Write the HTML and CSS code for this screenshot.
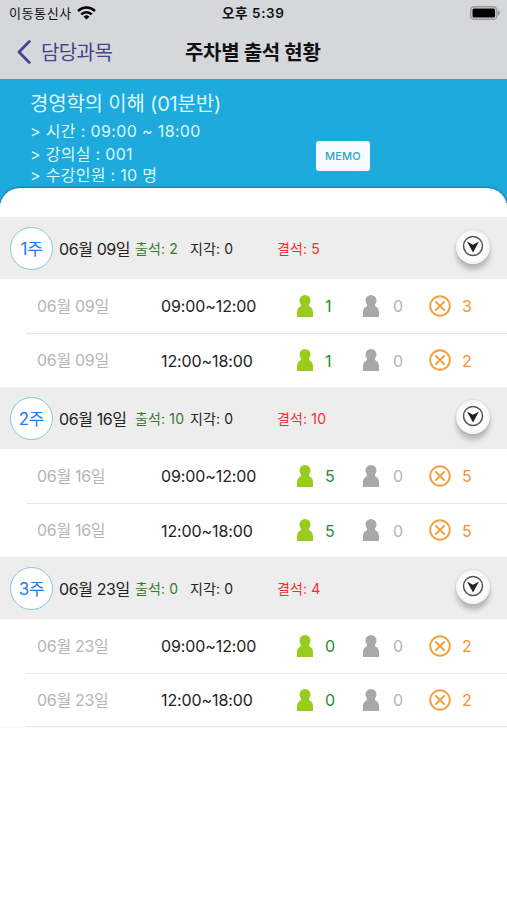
FILE: index.html
```
<!DOCTYPE html>
<html lang="ko">
<head>
<meta charset="UTF-8">
<meta name="viewport" content="width=device-width, initial-scale=1.0">
<title>주차별 출석 현황</title>
<link rel="stylesheet" href="styles.css">
</head>
<body>

<svg class="defs" width="0" height="0">
  <symbol id="person" viewBox="0 0 16 22">
    <path d="M8 0a5.500 5.500 0 0 1 5.500 5.500c0 2-.9 3-1.500 4-.2 1 .2 1.700 1 2.200 2.300 1.300 3 3.300 3 5.800V22H0v-4.500c0-2.500.7-4.500 3-5.800.8-.5 1.200-1.200 1-2.200-.6-1-1.500-2-1.500-4A5.500 5.500 0 0 1 8 0z" fill="currentColor"/>
  </symbol>
  <symbol id="absent" viewBox="0 0 22 22">
    <circle cx="11" cy="11" r="9.800" fill="none" stroke="currentColor" stroke-width="1.900"/>
    <path d="M7 7l8 8M15 7l-8 8" stroke="currentColor" stroke-width="1.900" stroke-linecap="round"/>
  </symbol>
  <symbol id="arrow" viewBox="0 0 22 22">
    <circle cx="11" cy="11" r="9.500" fill="none" stroke="#555" stroke-width="1.500"/>
    <path d="M5 6.500l6 3.200 6-3.200-6 11z" fill="#222"/>
  </symbol>
</svg>

<header class="top">
  <div class="status">
    <span class="carrier">이동통신사</span>
    <svg class="wifi" width="19" height="14" viewBox="0 0 19 14">
      <g fill="none" stroke="#000" stroke-width="2.500">
        <path d="M1 5a12.200 12.200 0 0 1 17 0"/>
        <path d="M4.200 8.400a7.600 7.600 0 0 1 10.600 0"/>
      </g>
      <path d="M6.600 10.700a4.200 4.200 0 0 1 5.800 0L9.500 13.600z"/>
    </svg>
    <span class="clock">오후 5:39</span>
    <svg class="battery" width="31" height="14" viewBox="0 0 31 14">
      <rect x=".7" y=".7" width="26.200" height="12.600" rx="3.600" fill="none" stroke="#999" stroke-width="1.400"/>
      <rect x="2.500" y="2.500" width="22.600" height="9" rx="1.500"/>
      <path d="M28 4.500c2.700.8 2.700 4.200 0 5z" fill="#999"/>
    </svg>
  </div>
  <div class="nav">
    <a class="back">
      <svg width="14" height="24" viewBox="0 0 14 24"><path d="M12.300 1.500L2 12l10.300 10.500" fill="none" stroke="currentColor" stroke-width="2.700" stroke-linecap="round" stroke-linejoin="round"/></svg>
      <span>담당과목</span>
    </a>
    <h1>주차별 출석 현황</h1>
  </div>
</header>

<section class="course">
  <div class="info">
    <h2>경영학의 이해 (01분반)</h2>
    <p class="time">&gt; 시간 : 09:00 ~ 18:00</p>
    <p class="room">&gt; 강의실 : 001</p>
    <p class="count">&gt; 수강인원 : 10 명</p>
  </div>
  <button class="memo">MEMO</button>
</section>

<main class="panel">
  <section class="week">
    <div class="week-head">
      <span class="badge">1주</span>
      <span class="date">06월 09일</span>
      <span class="att">출석: 2</span>
      <span class="late">지각: 0</span>
      <span class="abs">결석: 5</span>
      <button class="toggle"><svg><use href="#arrow"/></svg></button>
    </div>
    <div class="row">
      <span class="day">06월 09일</span>
      <span class="hours">09:00~12:00</span>
      <svg class="person green"><use href="#person"/></svg><span class="num n-att">1</span>
      <svg class="person gray"><use href="#person"/></svg><span class="num n-late">0</span>
      <svg class="cross"><use href="#absent"/></svg><span class="num n-abs">3</span>
    </div>
    <div class="row">
      <span class="day">06월 09일</span>
      <span class="hours">12:00~18:00</span>
      <svg class="person green"><use href="#person"/></svg><span class="num n-att">1</span>
      <svg class="person gray"><use href="#person"/></svg><span class="num n-late">0</span>
      <svg class="cross"><use href="#absent"/></svg><span class="num n-abs">2</span>
    </div>
  </section>

  <section class="week">
    <div class="week-head">
      <span class="badge">2주</span>
      <span class="date">06월 16일</span>
      <span class="att">출석: 10</span>
      <span class="late">지각: 0</span>
      <span class="abs">결석: 10</span>
      <button class="toggle"><svg><use href="#arrow"/></svg></button>
    </div>
    <div class="row">
      <span class="day">06월 16일</span>
      <span class="hours">09:00~12:00</span>
      <svg class="person green"><use href="#person"/></svg><span class="num n-att">5</span>
      <svg class="person gray"><use href="#person"/></svg><span class="num n-late">0</span>
      <svg class="cross"><use href="#absent"/></svg><span class="num n-abs">5</span>
    </div>
    <div class="row">
      <span class="day">06월 16일</span>
      <span class="hours">12:00~18:00</span>
      <svg class="person green"><use href="#person"/></svg><span class="num n-att">5</span>
      <svg class="person gray"><use href="#person"/></svg><span class="num n-late">0</span>
      <svg class="cross"><use href="#absent"/></svg><span class="num n-abs">5</span>
    </div>
  </section>

  <section class="week">
    <div class="week-head">
      <span class="badge">3주</span>
      <span class="date">06월 23일</span>
      <span class="att">출석: 0</span>
      <span class="late">지각: 0</span>
      <span class="abs">결석: 4</span>
      <button class="toggle"><svg><use href="#arrow"/></svg></button>
    </div>
    <div class="row">
      <span class="day">06월 23일</span>
      <span class="hours">09:00~12:00</span>
      <svg class="person green"><use href="#person"/></svg><span class="num n-att">0</span>
      <svg class="person gray"><use href="#person"/></svg><span class="num n-late">0</span>
      <svg class="cross"><use href="#absent"/></svg><span class="num n-abs">2</span>
    </div>
    <div class="row">
      <span class="day">06월 23일</span>
      <span class="hours">12:00~18:00</span>
      <svg class="person green"><use href="#person"/></svg><span class="num n-att">0</span>
      <svg class="person gray"><use href="#person"/></svg><span class="num n-late">0</span>
      <svg class="cross"><use href="#absent"/></svg><span class="num n-abs">2</span>
    </div>
  </section>
</main>

</body>
</html>
```
FILE: styles.css
```
* { box-sizing: border-box; }
body { margin: 0; height: 900px; overflow: hidden; background: #fff; color: #222; font-family: Inter, "Noto Sans CJK KR", sans-serif; white-space: nowrap; }
h1, h2, p { margin: 0; font-weight: 400; }
button { border: none; padding: 0; font-family: inherit; }
svg { display: block; flex: none; }
.defs { display: none; }

.top { height: 79px; background: #d6d7db; }
.status { display: grid; grid-template-columns: 68px 145px 248px 31px; align-items: center; height: 26px; padding-left: 9px; font-size: 13px; line-height: 26px; color: #111; }
.carrier { letter-spacing: 0.6px; }
.clock { grid-column: 3; font-size: 13.5px; font-weight: 600; letter-spacing: 0.6px; }
.nav { display: grid; grid-template-columns: 168px 1fr; align-items: center; height: 51px; padding-left: 17px; }
.back { display: flex; align-items: center; gap: 10px; color: #45458c; font-size: 20px; letter-spacing: -0.6px; }
.nav h1 { font-size: 20px; font-weight: 700; color: #111; letter-spacing: -0.3px; }

.course { display: flex; height: 124px; background: #1eaadc; color: #dcf8ff; }
.info { width: 316px; padding: 12px 0 0 30px; }
.info h2 { font-size: 20px; line-height: 26px; letter-spacing: -0.2px; }
.info p { font-size: 16px; }
.info .time { line-height: 28px; letter-spacing: 0.35px; }
.info .room { line-height: 19px; letter-spacing: 0.3px; }
.info .count { line-height: 22px; letter-spacing: 0.3px; }
.memo { width: 54px; height: 30px; margin-top: 62px; border-radius: 3px; background: #f7fafb; color: #2fa3cd; font-size: 11px; font-weight: 500; letter-spacing: 0.2px; }

.panel { position: relative; margin-top: -15px; padding-top: 29px; border-radius: 20px 20px 0 0; background: #fff; box-shadow: 0 -1px 2px rgba(0,60,90,0.45); }
.week-head { display: grid; grid-template-columns: 49px 76px 55px 87px 179px 36px; align-items: center; height: 62px; padding-left: 10px; background: #ededed; font-size: 14px; }
.badge { display: flex; align-items: center; justify-content: center; width: 43px; height: 43px; padding-bottom: 2px; border: 1px solid #80c8d8; border-radius: 50%; background: #fff; color: #1c7ef0; font-size: 17px; letter-spacing: -0.3px; }
.date { padding-bottom: 1px; font-size: 16px; letter-spacing: -0.4px; }
.att { color: #357a2f; }
.att, .late, .abs { letter-spacing: 0.15px; }
.abs { color: #f52d34; }
.toggle { display: flex; justify-content: center; width: 34px; height: 34px; margin-bottom: 2px; padding-top: 5px; border-radius: 50%; background: radial-gradient(#fff 50%, #e0e0e0); box-shadow: 0 6px 5px rgba(0,0,0,0.22), 0 0 2px rgba(0,0,0,0.2); }
.toggle svg { width: 22px; height: 22px; }

.row { display: grid; grid-template-columns: 124px 136px 28px 38px 30px 36px 33px 20px; align-items: center; height: 53px; margin-left: 26px; padding: 0 0 1px 11px; }
.row:nth-child(2) { height: 55px; border-bottom: 1px solid #e6e6e6; }
.week:last-child .row:last-child { border-bottom: 1px solid #e6e6e6; }
.day { padding-bottom: 2px; color: #b5b5b5; font-size: 16px; letter-spacing: -0.3px; }
.hours { padding-top: 1px; font-size: 16px; letter-spacing: -0.1px; }
.person { width: 16px; height: 22px; }
.green { color: #99cc1c; }
.gray { color: #a8a8a8; }
.cross { width: 22px; height: 22px; color: #f2a03c; }
.num { padding-top: 1px; font-size: 16px; }
.n-att { color: #1e8f2e; }
.n-late { color: #b5b5b5; }
.n-abs { color: #f7922a; }
```
